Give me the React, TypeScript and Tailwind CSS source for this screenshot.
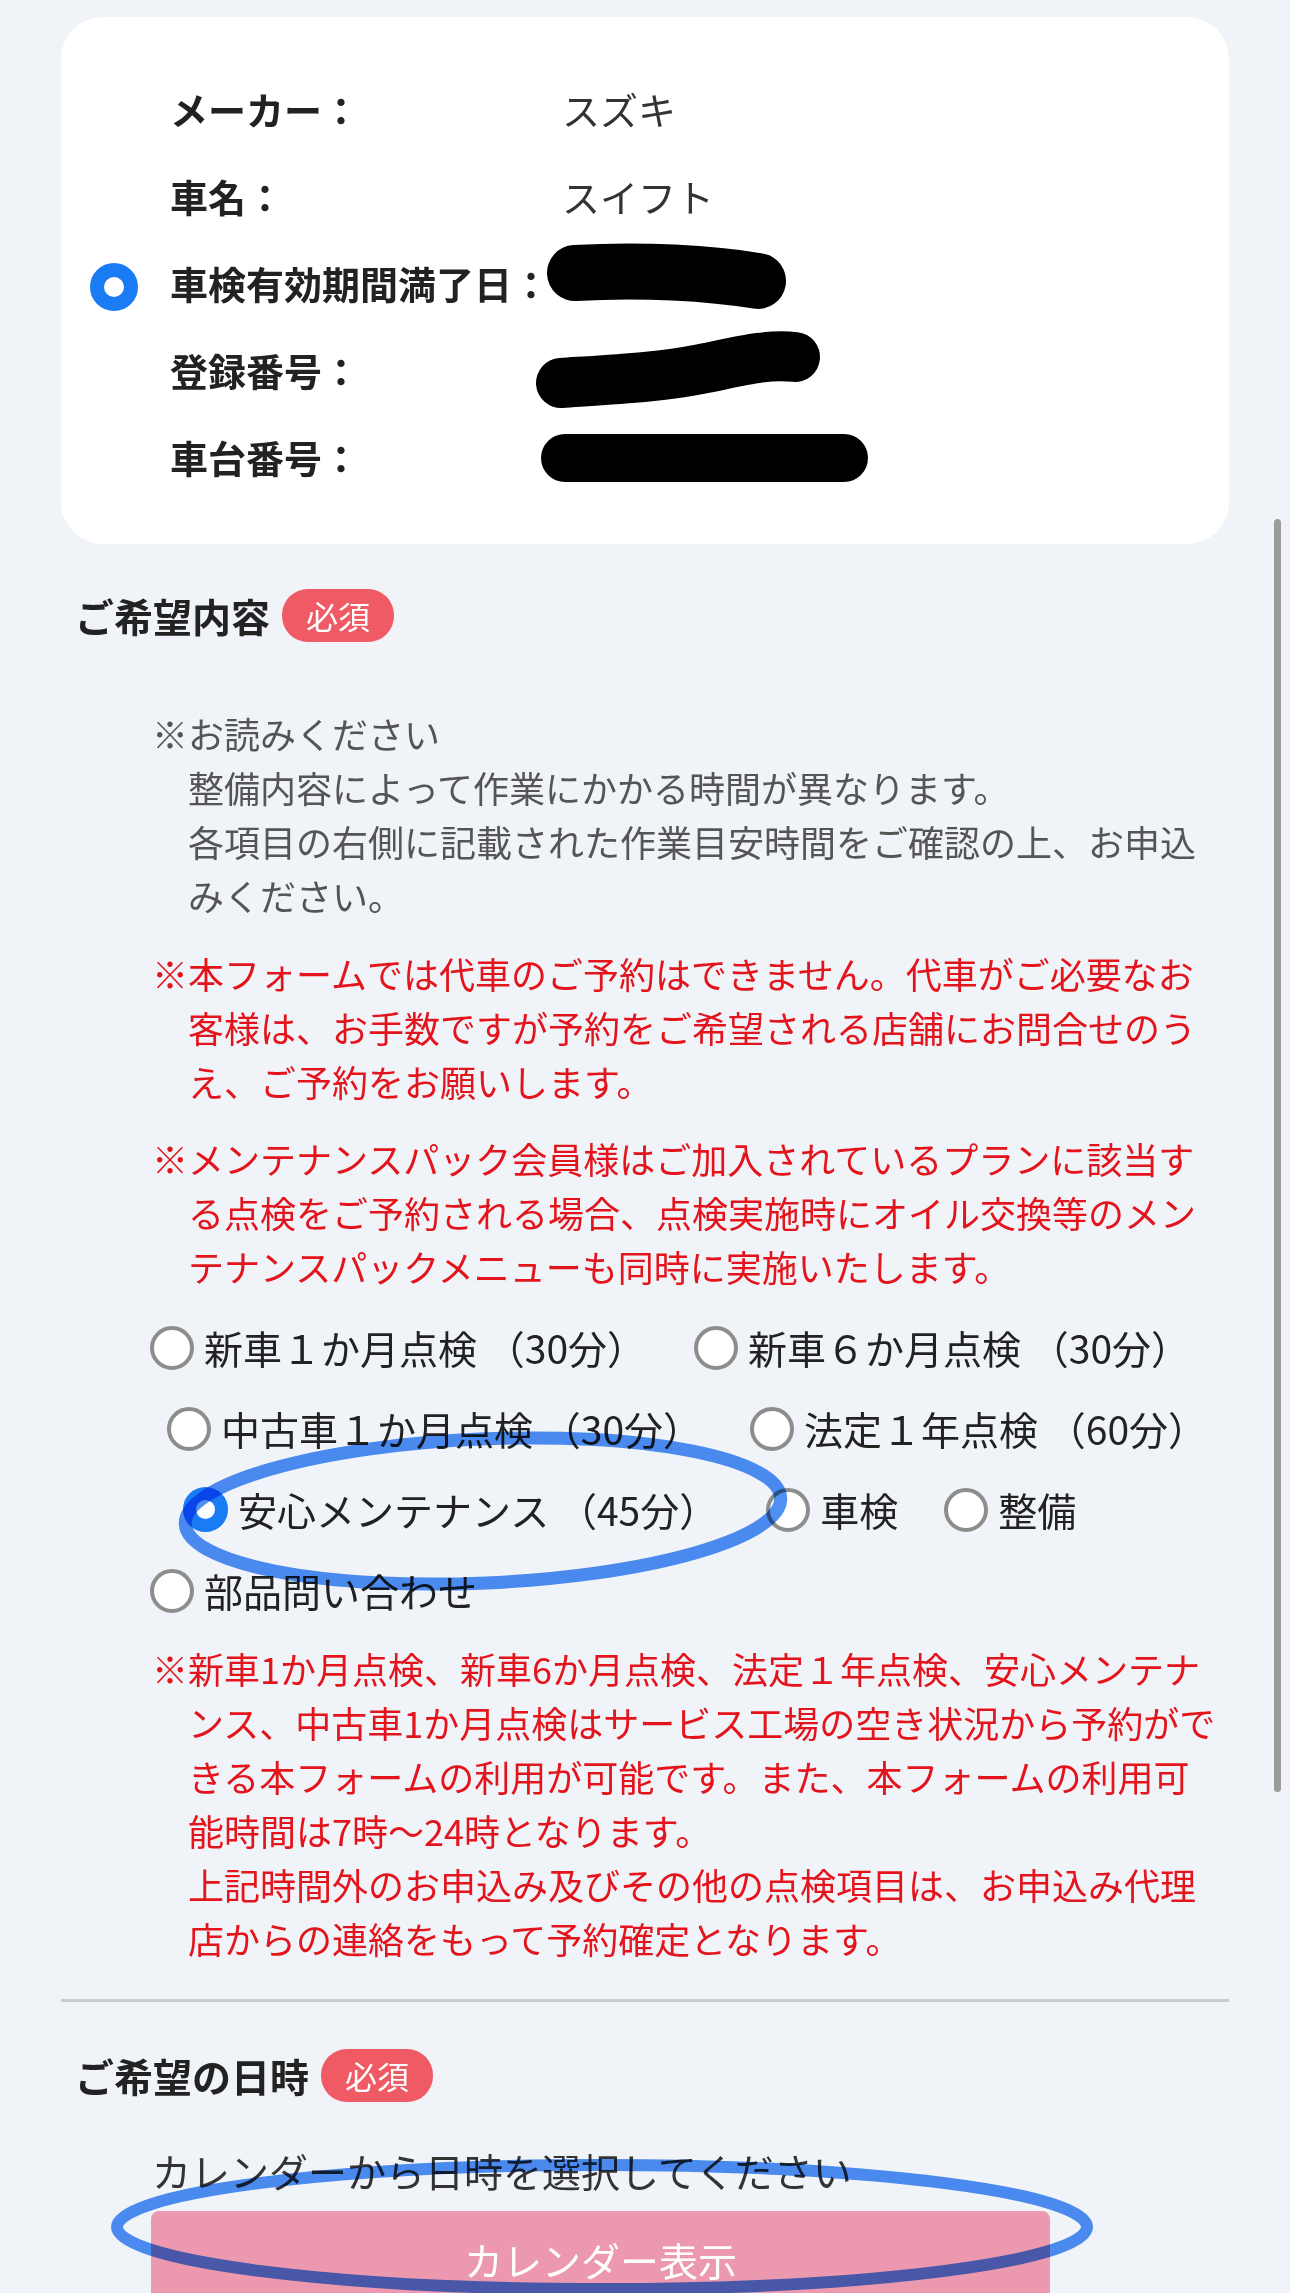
import type { ReactNode } from "react";

type CarRow = { label: string; value: string; checked?: boolean };

const carRows: CarRow[] = [
  { label: "メーカー：", value: "スズキ" },
  { label: "車名：", value: "スイフト" },
  { label: "車検有効期間満了日：", value: "", checked: true },
  { label: "登録番号：", value: "" },
  { label: "車台番号：", value: "" },
];

function Radio({ checked }: { checked?: boolean }) {
  if (checked) {
    return <span className="box-border size-[45px] shrink-0 rounded-full border-[13px] border-[#1a7cf4] bg-white" />;
  }
  return <span className="box-border size-[44px] shrink-0 rounded-full border-[4px] border-[#8d8d8d] bg-white" />;
}

function Option({ label, checked, className = "" }: { label: string; checked?: boolean; className?: string }) {
  return (
    <label className={`flex items-center gap-[10px] ${className}`}>
      <Radio checked={checked} />
      <span className="whitespace-pre text-[39px] leading-none text-[#222]">{label}</span>
    </label>
  );
}

function Required() {
  return (
    <span className="ml-[12px] flex h-[53px] items-center rounded-[26px] bg-[#ef5a64] px-[24px] text-[32px] leading-none text-white">
      必須
    </span>
  );
}

function SectionTitle({ title, className = "" }: { title: string; className?: string }) {
  return (
    <div className={`flex h-[54px] items-center pl-[14px] ${className}`}>
      <h2 className="text-[39px] font-bold leading-none text-[#222]">{title}</h2>
      <Required />
    </div>
  );
}

function Note({ children, red, className = "" }: { children: ReactNode; red?: boolean; className?: string }) {
  return (
    <p className={`pl-[36px] indent-[-36px] ${red ? "text-[#e3141b]" : "text-[#555]"} ${className}`}>{children}</p>
  );
}

function VehicleCard() {
  return (
    <div className="relative rounded-[42px] bg-white pb-[44px] pl-[29px] pt-[48px]">
      {carRows.map((row) => (
        <div key={row.label} className="flex h-[87px] items-center">
          <div className="flex w-[80px] items-center pt-[8px]">
            {row.checked && (
              <span className="box-border size-[48px] rounded-full border-[14px] border-[#1a7cf4] bg-white" />
            )}
          </div>
          <div className="w-[392px] text-[38px] font-bold leading-none text-[#222]">{row.label}</div>
          <div className="text-[38px] leading-none text-[#333]">{row.value}</div>
        </div>
      ))}
      {/* 個人情報の塗りつぶし */}
      <svg className="pointer-events-none absolute left-0 top-0" width="1168" height="527" viewBox="0 0 1168 527" fill="none">
        <path d="M514 256 C580 252 650 256 697 264" stroke="#000" strokeWidth="56" strokeLinecap="round" />
        <path d="M500 366 C560 362 600 360 640 352 C680 344 705 337 734 340" stroke="#000" strokeWidth="50" strokeLinecap="round" />
        <path d="M504 441 L783 441" stroke="#000" strokeWidth="48" strokeLinecap="round" />
      </svg>
    </div>
  );
}

export default function App() {
  return (
    <div className="relative h-[2293px] w-[1290px] overflow-hidden bg-[#f0f3f8] font-['Noto_Sans_CJK_JP',sans-serif]">
      <div className="px-[61px] pt-[17px]">
        <VehicleCard />

        <SectionTitle title="ご希望内容" className="mt-[44px]" />

        <div className="mt-[64px] pl-[91px] pr-[5px] text-[36px] leading-[54px]">
          <Note>
            ※お読みください
            <br />
            整備内容によって作業にかかる時間が異なります。
            <br />
            各項目の右側に記載された作業目安時間をご確認の上、お申込みください。
          </Note>
          <Note red className="mt-[24px]">
            ※本フォームでは代車のご予約はできません。代車がご必要なお客様は、お手数ですが予約をご希望される店舗にお問合せのうえ、ご予約をお願いします。
          </Note>
          <Note red className="mt-[23px]">
            ※メンテナンスパック会員様はご加入されているプランに該当する点検をご予約される場合、点検実施時にオイル交換等のメンテナンスパックメニューも同時に実施いたします。
          </Note>
        </div>

        <div className="mt-[14px]">
          <div className="ml-[89px] flex h-[81px] items-center">
            <Option label="新車１か月点検 （30分）" />
            <Option label="新車６か月点検 （30分）" className="ml-[48px]" />
          </div>
          <div className="ml-[106px] flex h-[81px] items-center">
            <Option label="中古車１か月点検 （30分）" />
            <Option label="法定１年点検 （60分）" className="ml-[48px]" />
          </div>
          <div className="ml-[122px] flex h-[81px] items-center">
            <Option label="安心メンテナンス （45分）" checked />
            <Option label="車検" className="ml-[48px]" />
            <Option label="整備" className="ml-[46px]" />
          </div>
          <div className="ml-[89px] flex h-[81px] items-center">
            <Option label="部品問い合わせ" />
          </div>
        </div>

        <div className="mt-[10px] pl-[91px] pr-[5px] text-[36px] leading-[54px]">
          <Note red>
            ※新車1か月点検、新車6か月点検、法定１年点検、安心メンテナンス、中古車1か月点検はサービス工場の空き状況から予約ができる本フォームの利用が可能です。また、本フォームの利用可能時間は7時〜24時となります。
            <br />
            上記時間外のお申込み及びその他の点検項目は、お申込み代理店からの連絡をもって予約確定となります。
          </Note>
        </div>

        <hr className="mt-[34px] border-0 border-t-[3px] border-[#cbcbcb]" />

        <SectionTitle title="ご希望の日時" className="mt-[46px]" />

        <p className="mt-[41px] pl-[91px] text-[39px] leading-[54px] text-[#333]">カレンダーから日時を選択してください</p>

        <div className="ml-[90px] mt-[14px] w-[899px] rounded-[8px] bg-[#ec99b0] pb-[45px] pt-[21px] text-center text-[39px] leading-[54px] text-white">
          カレンダー表示
        </div>
      </div>

      {/* scroll thumb */}
      <div className="absolute left-[1274px] top-[519px] h-[1273px] w-[7px] rounded-full bg-[#9c9c9c]" />

      {/* 手書きの丸囲み */}
      <svg
        className="pointer-events-none absolute left-0 top-0 mix-blend-multiply"
        width="1290"
        height="2293"
        viewBox="0 0 1290 2293"
        fill="none"
      >
        <ellipse cx="483" cy="1511" rx="298" ry="72" transform="rotate(-2.5 483 1511)" stroke="#2f7cf2" strokeWidth="13" strokeOpacity="0.85" />
        <ellipse cx="602" cy="2227" rx="485" ry="62" stroke="#2f7cf2" strokeWidth="12" strokeOpacity="0.85" />
      </svg>
    </div>
  );
}
